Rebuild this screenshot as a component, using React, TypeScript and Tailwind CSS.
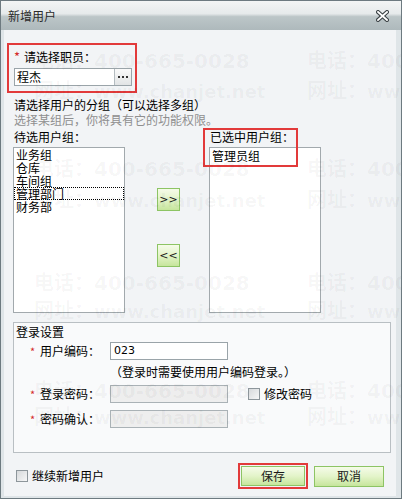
const watermarkRows = [19, 49, 127, 158, 241, 269, 349, 375, 467];

function Watermark() {
  return (
    <div className="pointer-events-none absolute inset-0 font-['DejaVu_Sans','Noto_Sans_CJK_SC',sans-serif] font-bold text-[rgba(0,0,0,0.038)]">
      {watermarkRows.map((top, i) =>
        [30, 303].map((left) => (
          <div
            key={`${i}-${left}`}
            className="absolute whitespace-nowrap leading-[22px]"
            style={{ top, left }}
          >
            {i % 2 === 0 ? (
              <span className="text-[20px]">
                <span className="font-['Noto_Sans_CJK_SC',sans-serif]">电话：</span>400-665-0028
              </span>
            ) : (
              <span className="text-[18px]">
                <span className="text-[20px] font-['Noto_Sans_CJK_SC',sans-serif]">网址：</span>www.chanjet.net
              </span>
            )}
          </div>
        ))
      )}
    </div>
  );
}

function Star({ small }: { small?: boolean }) {
  return (
    <span
      className={
        small
          ? "inline-block w-[10px] text-[11px] leading-[14px] text-[#d42a2a]"
          : "inline-block w-[10px] text-[13px] leading-[14px] text-[#d42a2a]"
      }
    >
      *
    </span>
  );
}

function CheckBox() {
  return (
    <span className="inline-block h-[12px] w-[12px] border border-[#8d969b] bg-[linear-gradient(135deg,#d6d9db,#f6f7f7)]" />
  );
}

function GreenButton({ children, className }: { children: React.ReactNode; className: string }) {
  return (
    <div
      className={`flex items-center justify-center border border-[#8dc464] bg-[linear-gradient(#f5fbe9_0%,#e3f4c9_50%,#c6e59c_100%)] text-[#1a1a1a] ${className}`}
    >
      {children}
    </div>
  );
}

export default function App() {
  return (
    <div className="relative h-[499px] w-[402px] overflow-hidden border border-[#6d7a80] bg-[#dfe5e8] font-['Noto_Sans_CJK_SC',sans-serif] text-[12px] leading-[14px] text-black">
      {/* title bar */}
      <div className="flex h-[29px] items-center justify-between bg-[linear-gradient(#f3f5f5_0%,#e6eaeb_44%,#bcc6c8_54%,#aeb9bc_100%)] pl-[7px] pr-[12px]">
        <span className="text-[#2a2a2a]">新增用户</span>
        <svg width="13" height="12" viewBox="0 0 13 12">
          <path d="M2 2 L11 10 M11 2 L2 10" stroke="#3c4346" strokeWidth="4" strokeLinecap="square" />
          <path d="M2 2 L11 10 M11 2 L2 10" stroke="#ffffff" strokeWidth="1.8" strokeLinecap="square" />
        </svg>
      </div>

      <div className="relative ml-[3px] mr-[5px] flex h-[466px] flex-col bg-[#f2f4f6]">
        {/* employee picker */}
        <div className="ml-[3px] mt-[13px] h-[50px] w-[130px] border-2 border-[#e23a3a] pl-[5px] pt-[5px]">
          <div className="flex items-center">
            <Star />
            <span>请选择职员：</span>
          </div>
          <div className="mt-[4px] flex h-[18px] w-[118px] border border-[#9aa4a9] bg-white">
            <span className="flex-1 pl-[2px] leading-[16px]">程杰</span>
            <span className="flex w-[17px] items-center justify-center gap-[2px] border-l border-[#b4bcc0] bg-[linear-gradient(#fafafa,#e2e4e5)]">
              <span className="h-[2px] w-[2px] bg-[#333]" />
              <span className="h-[2px] w-[2px] bg-[#333]" />
              <span className="h-[2px] w-[2px] bg-[#333]" />
            </span>
          </div>
        </div>

        <div className="ml-[10px] mt-[4px] leading-[15px]">
          <div>请选择用户的分组（可以选择多组）</div>
          <div className="text-[#8f8f8f]">选择某组后，你将具有它的功能权限。</div>
        </div>

        {/* group lists */}
        <div className="relative ml-[9px] mt-[3px] grid grid-cols-[112px_84px_112px]">
          <div className="pl-[1px]">待选用户组：</div>
          <div />
          <div className="pl-[1px]">已选中用户组：</div>

          <div className="mt-[3px] h-[166px] border border-[#a2a9ad] bg-white leading-[13px]">
            <div className="pl-[2px]">业务组</div>
            <div className="pl-[2px]">仓库</div>
            <div className="pl-[2px]">车间组</div>
            <div className="h-[13px] border border-dotted border-black pl-[1px] leading-[11px]">管理部门</div>
            <div className="pl-[2px]">财务部</div>
          </div>
          <div className="mt-[3px] flex flex-col pl-[32px] pt-[41px]">
            <GreenButton className="h-[23px] w-[23px] font-['DejaVu_Sans',sans-serif] text-[11px]">&gt;&gt;</GreenButton>
            <GreenButton className="mt-[33px] h-[23px] w-[23px] font-['DejaVu_Sans',sans-serif] text-[11px]">&lt;&lt;</GreenButton>
          </div>
          <div className="mt-[3px] h-[166px] border border-[#a2a9ad] bg-white pl-[2px] pt-[1px] leading-[14px]">
            管理员组
          </div>

          {/* highlight around selected groups */}
          <div className="pointer-events-none absolute left-[190px] top-[-2px] h-[39px] w-[95px] border-2 border-[#e23a3a]" />
        </div>

        {/* login settings */}
        <div className="ml-[9px] mt-[9px] h-[131px] w-[378px] border border-[#b9bfc3] bg-[#f9fafb] pl-[2px] pt-[2px]">
          <div>登录设置</div>
          <div className="mt-[3px] grid grid-cols-[80px_118px] items-center pl-[14px]">
            <div className="flex items-center">
              <Star small />
              <span>用户编码：</span>
            </div>
            <div className="h-[18px] border border-[#9aa4a9] bg-white pl-[3px] font-['DejaVu_Sans',sans-serif] text-[11px] leading-[16px]">
              023
            </div>
          </div>
          <div className="ml-[94px] mt-[5px]">（登录时需要使用用户编码登录。）</div>
          <div className="mt-[6px] flex items-center pl-[14px]">
            <div className="flex w-[80px] items-center">
              <Star small />
              <span>登录密码：</span>
            </div>
            <div className="h-[18px] w-[118px] border border-[#aab2b6] bg-[#eeeeee]" />
            <span className="ml-[20px] flex items-center">
              <CheckBox />
            </span>
            <span className="ml-[4px]">修改密码</span>
          </div>
          <div className="mt-[7px] flex items-center pl-[14px]">
            <div className="flex w-[80px] items-center">
              <Star small />
              <span>密码确认：</span>
            </div>
            <div className="h-[18px] w-[118px] border border-[#aab2b6] bg-[#eeeeee]" />
          </div>
        </div>

        {/* footer */}
        <div className="mt-[10px] flex h-[26px] items-center pr-[12px]">
          <div className="ml-[12px] flex items-center">
            <CheckBox />
            <span className="ml-[4px]">继续新增用户</span>
          </div>
          <div className="flex-1" />
          <div className="h-[26px] w-[70px] border-2 border-[#e23a3a] p-[1px]">
            <GreenButton className="h-[20px] w-full">保存</GreenButton>
          </div>
          <GreenButton className="ml-[6px] h-[21px] w-[70px]">取消</GreenButton>
        </div>

        <Watermark />
      </div>
    </div>
  );
}
